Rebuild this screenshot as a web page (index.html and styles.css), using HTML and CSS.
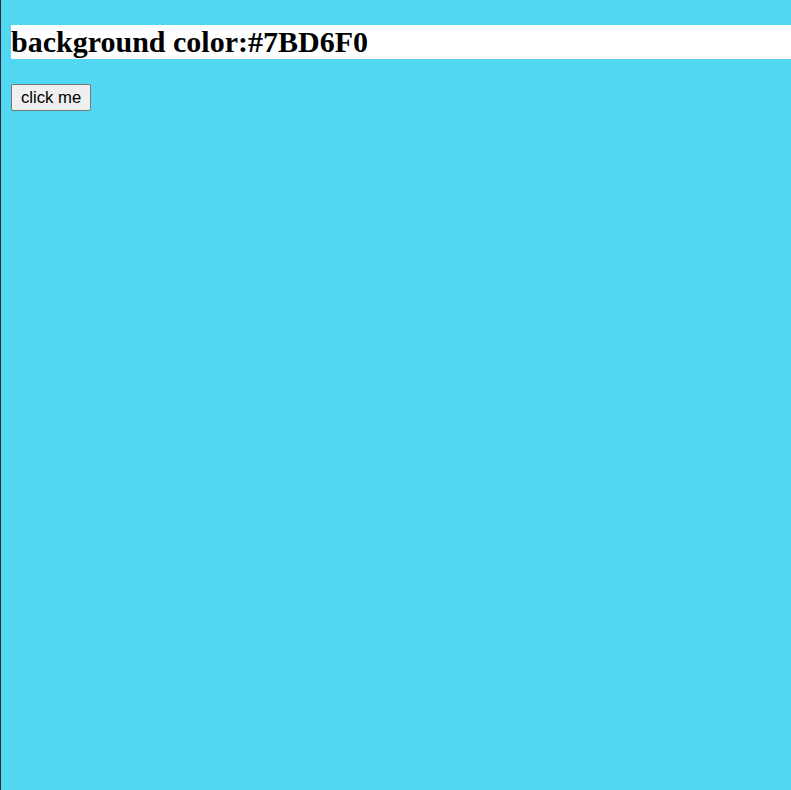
FILE: index.html
```html
<!DOCTYPE html>
<html>
<head>
<meta charset="utf-8">
<link rel="stylesheet" href="styles.css">
</head>
<body class="page">
<h1 class="title">background color:#7BD6F0</h1>
<button class="btn">click me</button>
</body>
</html>
```
FILE: styles.css
```css
html {
  background: #52d7f3;
  border-left: 1px solid #2b2533;
  min-height: 100%;
}
.page {
  margin: 0;
  padding: 25px 0 0 10px;
}
.title {
  margin: 0 0 25px 0;
  background: #ffffff;
  font-family: "Liberation Serif", serif;
  font-weight: bold;
  font-size: 30px;
  line-height: 34px;
  color: #000;
}
.btn {
  font-family: "Liberation Sans", Arial, sans-serif;
  font-size: 16.67px;
  line-height: 19px;
  margin: 0;
  padding: 3px 9px;
  border: 1px solid #767676;
  border-radius: 2px;
  background: #efefef;
  color: #000;
}
```
